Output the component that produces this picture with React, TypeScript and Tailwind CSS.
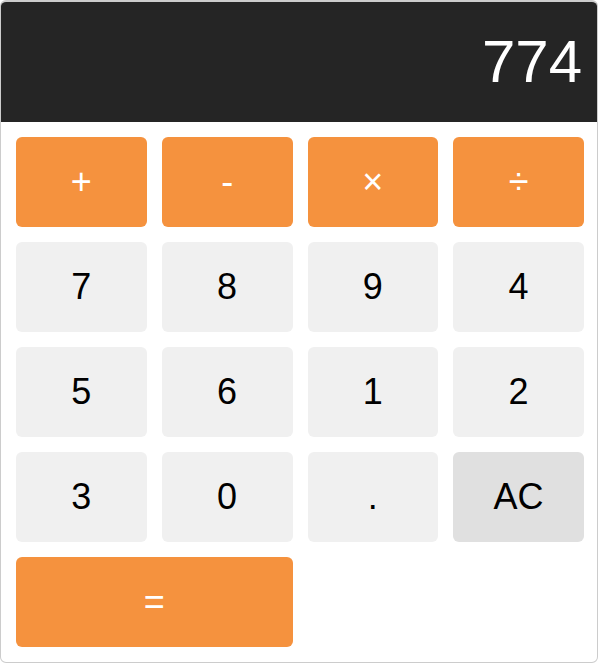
import { useState } from "react";

const keys: { label: string; kind: "op" | "num" | "clear" | "eq" }[] = [
  { label: "+", kind: "op" },
  { label: "-", kind: "op" },
  { label: "×", kind: "op" },
  { label: "÷", kind: "op" },
  { label: "7", kind: "num" },
  { label: "8", kind: "num" },
  { label: "9", kind: "num" },
  { label: "4", kind: "num" },
  { label: "5", kind: "num" },
  { label: "6", kind: "num" },
  { label: "1", kind: "num" },
  { label: "2", kind: "num" },
  { label: "3", kind: "num" },
  { label: "0", kind: "num" },
  { label: ".", kind: "num" },
  { label: "AC", kind: "clear" },
  { label: "=", kind: "eq" },
];

const styles = {
  op: "bg-[#f5923e] text-white",
  eq: "bg-[#f5923e] text-white col-span-2",
  num: "bg-[#f0f0f0] text-black",
  clear: "bg-[#e0e0e0] text-black",
};

export default function App() {
  const [display, setDisplay] = useState("774");

  const onPress = (label: string) => {
    if (label === "AC") setDisplay("0");
  };

  return (
    <div className="w-[598px] h-[663px] border border-t-2 border-[#cccccc] rounded-[6px] overflow-hidden bg-white font-['Liberation_Sans',Arial,sans-serif]">
      <div className="h-[120px] bg-[#252525] text-white text-[60px] flex items-center justify-end pr-[15px]">{display}</div>
      <div className="grid grid-cols-4 gap-[15px] pl-[15px] pr-[13px] py-[15px]">
        {keys.map((k) => (
          <button key={k.label} onClick={() => onPress(k.label)} className={`h-[90px] rounded-[6px] text-[36px] flex items-center justify-center ${styles[k.kind]}`}>
            {k.label}
          </button>
        ))}
      </div>
    </div>
  );
}
